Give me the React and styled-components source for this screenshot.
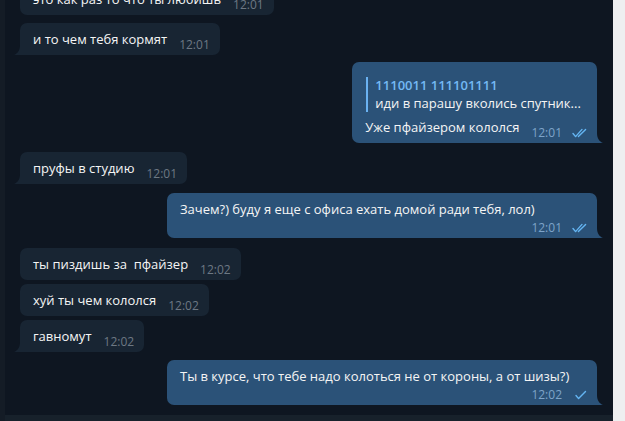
import React from 'react';
import styled, { createGlobalStyle } from 'styled-components';

const GlobalStyle = createGlobalStyle`
  html, body {
    margin: 0;
    padding: 0;
    background: #0e1621;
  }
  body {
    font-family: "Open Sans", "Noto Sans", sans-serif;
    -webkit-font-smoothing: antialiased;
  }
`;

const Window = styled.div`
  display: flex;
  width: 100vw;
  height: 100vh;
  overflow: hidden;
`;

const ChatColumn = styled.div`
  flex: 1;
  display: flex;
  flex-direction: column;
  min-width: 0;
  background: #0e1621;
  border-left: 5px solid #141c26;
`;

const History = styled.div`
  flex: 1;
  display: flex;
  flex-direction: column;
  justify-content: flex-end;
  overflow: hidden;
  padding: 0 16px 10px 15px;
`;

const InputEdge = styled.div`
  height: 6px;
  background: #17212b;
`;

const ScrollTrack = styled.div`
  width: 12px;
  background: #eeeff0;
`;

const Row = styled.div`
  display: flex;
  flex-shrink: 0;
  justify-content: ${({ out }) => (out ? 'flex-end' : 'flex-start')};
  margin-top: ${({ space }) => space}px;
`;

const Bubble = styled.div`
  position: relative;
  max-width: 430px;
  box-sizing: border-box;
  padding: ${({ reply }) => (reply ? '8px' : '7px')} ${({ out }) => (out ? '8px' : '10px')} 7px 13px;
  background: ${({ out }) => (out ? '#2b5278' : '#182533')};
  border-radius: 7px;
  ${({ tail, out }) => (tail ? (out ? 'border-bottom-right-radius: 0;' : 'border-bottom-left-radius: 0;') : '')}
  color: #f5f5f5;
  font-size: 13px;
`;

const Tail = styled.svg`
  position: absolute;
  bottom: 0;
  ${({ out }) => (out ? 'right: -6px;' : 'left: -6px;')}
  width: 7px;
  height: 10px;
  fill: ${({ out }) => (out ? '#2b5278' : '#182533')};
`;

const Quote = styled.div`
  margin: 7px 0 6px 1px;
  padding-left: 7px;
  border-left: 2px solid #6ab2f2;
`;

const QuoteName = styled.div`
  font-weight: 600;
  line-height: 17px;
  color: #74b9f4;
`;

const QuoteText = styled.div`
  line-height: 18px;
  white-space: nowrap;
`;

const Body = styled.div`
  display: flex;
  flex-wrap: wrap;
  justify-content: flex-end;
  column-gap: 12px;
  row-gap: 2px;
`;

const Text = styled.div`
  flex: 1 1 auto;
  line-height: 18px;
  white-space: pre-wrap;
`;

const Meta = styled.div`
  display: flex;
  align-items: center;
  align-self: flex-end;
  height: 15px;
  margin-bottom: -4px;
  font-size: 12px;
  line-height: 15px;
  color: ${({ out }) => (out ? '#7ea4c9' : '#6d7883')};
`;

const Check = styled.svg`
  width: 17px;
  height: 10px;
  margin-left: 10px;
  fill: none;
  stroke: #64b5f2;
  stroke-width: 1.4;
  stroke-linecap: round;
  stroke-linejoin: round;
`;

const ReadMark = ({ read }) => (
  <Check viewBox="0 0 17 10">
    {read ? (
      <>
        <polyline points="1,5.5 3.6,8.6 10,1.4" />
        <polyline points="6.4,8.6 13.6,1.4" />
      </>
    ) : (
      <polyline points="4,5.5 6.6,8.6 13.5,1.4" />
    )}
  </Check>
);

const messages = [
  { text: 'это как раз то что ты любишь', time: '12:01', space: 0 },
  { text: 'и то чем тебя кормят', time: '12:01', space: 8, tail: true },
  {
    out: true,
    reply: { name: '1110011 111101111', text: 'иди в парашу вколись спутник...' },
    text: 'Уже пфайзером кололся',
    time: '12:01',
    read: true,
    space: 7,
    tail: true,
  },
  { text: 'пруфы в студию', time: '12:01', space: 9, tail: true },
  {
    out: true,
    text: 'Зачем?) буду я еще с офиса ехать домой ради тебя, лол)',
    time: '12:01',
    read: true,
    space: 9,
    tail: true,
  },
  { text: 'ты пиздишь за  пфайзер', time: '12:02', space: 10 },
  { text: 'хуй ты чем кололся', time: '12:02', space: 4 },
  { text: 'гавномут', time: '12:02', space: 4, tail: true },
  {
    out: true,
    text: 'Ты в курсе, что тебе надо колоться не от короны, а от шизы?)',
    time: '12:02',
    read: false,
    space: 8,
    tail: true,
  },
];

const Message = ({ out, reply, text, time, read, space, tail }) => (
  <Row out={out} space={space}>
    <Bubble out={out} reply={!!reply} tail={tail}>
      {reply && (
        <Quote>
          <QuoteName>{reply.name}</QuoteName>
          <QuoteText>{reply.text}</QuoteText>
        </Quote>
      )}
      <Body>
        <Text>{text}</Text>
        <Meta out={out}>
          {time}
          {out && <ReadMark read={read} />}
        </Meta>
      </Body>
      {tail && (
        <Tail out={out} viewBox="0 0 7 10">
          {out
            ? <path d="M0 0 V10 H7 C3.5 8.6 1 5.5 1 0 Z" />
            : <path d="M7 0 V10 H0 C3.5 8.6 6 5.5 6 0 Z" />}
        </Tail>
      )}
    </Bubble>
  </Row>
);

export default function App() {
  return (
    <>
      <GlobalStyle />
      <Window>
        <ChatColumn>
          <History>
            {messages.map((m, i) => <Message key={i} {...m} />)}
          </History>
          <InputEdge />
        </ChatColumn>
        <ScrollTrack />
      </Window>
    </>
  );
}
